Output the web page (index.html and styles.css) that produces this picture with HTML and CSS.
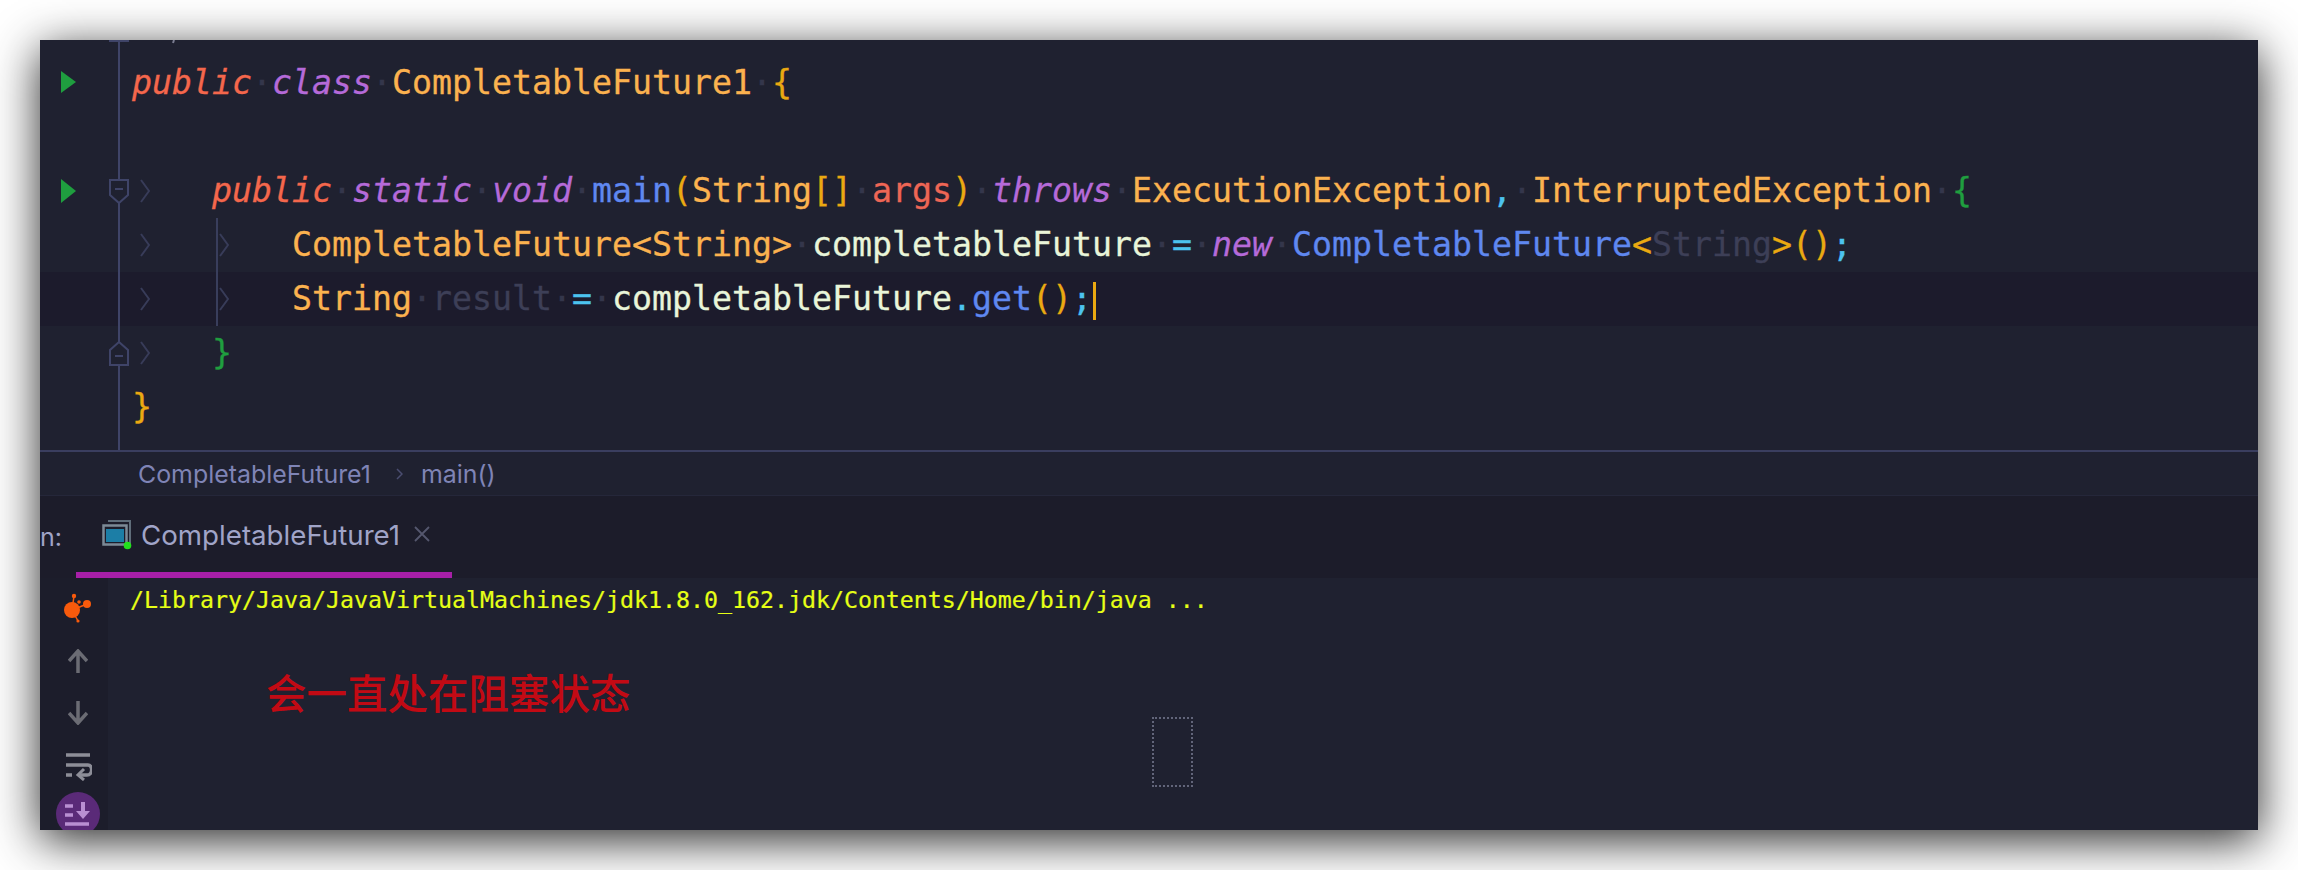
FILE: index.html
```html
<!DOCTYPE html>
<html lang="en">
<head>
<meta charset="utf-8">
<title>CompletableFuture1</title>
<link rel="stylesheet" href="styles.css">
</head>
<body>
<main class="window">
  <section class="editor">
    <div class="fold-line"></div>
    <div class="indent-guide"></div>
    <div class="clip-row"><svg class="clip-mark" width="150" height="4" viewBox="0 0 150 4"><path d="M69 1h20" stroke="#3f4468" stroke-width="2"/><path d="M134 0l-1 3" stroke="#7a7c90" stroke-width="2"/></svg></div>

    <div class="line">
      <div class="gutter"><svg class="run" width="15" height="22" viewBox="0 0 15 22"><path d="M0 0L15 11L0 22Z"/></svg></div>
      <code class="code"><span class="kw-a">public</span><span class="ws">·</span><span class="kw-b">class</span><span class="ws">·</span><span class="type">CompletableFuture1</span><span class="ws">·</span><span class="gold">{</span></code>
    </div>

    <div class="line">
      <div class="gutter"></div>
      <code class="code"></code>
    </div>

    <div class="line">
      <div class="gutter">
        <svg class="run" width="15" height="24" viewBox="0 0 15 24"><path d="M0 0L15 12L0 24Z"/></svg>
        <svg class="fold" width="20" height="25" viewBox="0 0 20 25"><path d="M1 1H19V16L10 24L1 16Z" fill="#1f2130" stroke="#3f4468" stroke-width="2"/><path d="M6 10H14" stroke="#3f4468" stroke-width="2"/></svg>
        <svg class="chev" width="10" height="24" viewBox="0 0 10 24"><path d="M1 1L9 12L1 23" fill="none" stroke="#383c59" stroke-width="2"/></svg>
      </div>
      <code class="code">    <span class="kw-a">public</span><span class="ws">·</span><span class="kw-b">static</span><span class="ws">·</span><span class="kw-b">void</span><span class="ws">·</span><span class="fn">main</span><span class="gold">(</span><span class="type">String</span><span class="gold">[]</span><span class="ws">·</span><span class="arg">args</span><span class="gold">)</span><span class="ws">·</span><span class="kw-b">throws</span><span class="ws">·</span><span class="type">ExecutionException</span><span class="op">,</span><span class="ws">·</span><span class="type">InterruptedException</span><span class="ws">·</span><span class="green">{</span></code>
    </div>

    <div class="line">
      <div class="gutter">
        <svg class="chev" width="10" height="24" viewBox="0 0 10 24"><path d="M1 1L9 12L1 23" fill="none" stroke="#383c59" stroke-width="2"/></svg>
        <svg class="chev-two" width="10" height="24" viewBox="0 0 10 24"><path d="M1 1L9 12L1 23" fill="none" stroke="#383c59" stroke-width="2"/></svg>
      </div>
      <code class="code">        <span class="type">CompletableFuture&lt;String&gt;</span><span class="ws">·</span><span class="var">completableFuture</span><span class="ws">·</span><span class="op">=</span><span class="ws">·</span><span class="kw-b">new</span><span class="ws">·</span><span class="fn">CompletableFuture</span><span class="gold">&lt;</span><span class="dim">String</span><span class="gold">&gt;()</span><span class="op">;</span></code>
    </div>

    <div class="line current">
      <div class="gutter">
        <svg class="chev" width="10" height="24" viewBox="0 0 10 24"><path d="M1 1L9 12L1 23" fill="none" stroke="#383c59" stroke-width="2"/></svg>
        <svg class="chev-two" width="10" height="24" viewBox="0 0 10 24"><path d="M1 1L9 12L1 23" fill="none" stroke="#383c59" stroke-width="2"/></svg>
      </div>
      <code class="code">        <span class="type">String</span><span class="ws">·</span><span class="dim">result</span><span class="ws">·</span><span class="op">=</span><span class="ws">·</span><span class="var">completableFuture</span><span class="op">.</span><span class="fn">get</span><span class="gold">()</span><span class="op">;</span><span class="caret"></span></code>
    </div>

    <div class="line">
      <div class="gutter">
        <svg class="fold" width="20" height="25" viewBox="0 0 20 25"><path d="M1 24H19V9L10 1L1 9Z" fill="#1f2130" stroke="#3f4468" stroke-width="2"/><path d="M6 15H14" stroke="#3f4468" stroke-width="2"/></svg>
        <svg class="chev" width="10" height="24" viewBox="0 0 10 24"><path d="M1 1L9 12L1 23" fill="none" stroke="#383c59" stroke-width="2"/></svg>
      </div>
      <code class="code">    <span class="green">}</span></code>
    </div>

    <div class="line">
      <div class="gutter"></div>
      <code class="code"><span class="gold">}</span></code>
    </div>
  </section>

  <nav class="crumbs"><span>CompletableFuture1</span><svg class="crumb-sep" width="7" height="12" viewBox="0 0 7 12"><path d="M1 1L6 6L1 11" fill="none" stroke="#4a4d70" stroke-width="1.5"/></svg><span>main()</span></nav>

  <div class="tabbar">
    <span class="tab-label">n:</span>
    <div class="tab">
      <svg class="tab-icon" width="30" height="30" viewBox="0 0 30 30"><path d="M6 1H28V24" fill="none" stroke="#5f6d7a" stroke-width="2"/><rect x="1.5" y="5.500" width="23" height="19" fill="#1c1d2b" stroke="#7c8a97" stroke-width="2.500"/><rect x="4" y="9" width="18" height="13" fill="#1c7ea6"/><circle cx="25.500" cy="25.500" r="3.800" fill="#22e01c"/></svg>
      <span class="tab-title">CompletableFuture1</span>
      <svg class="tab-close" width="16" height="16" viewBox="0 0 16 16"><path d="M1 1L15 15M15 1L1 15" stroke="#55576e" stroke-width="1.800"/></svg>
    </div>
  </div>

  <section class="console">
    <aside class="tools">
      <svg width="28" height="32" viewBox="0 0 28 32" class="tool-first"><g fill="#f85a0c"><circle cx="8" cy="18" r="8"/><circle cx="23" cy="12" r="4"/><circle cx="10" cy="4" r="2.200"/><circle cx="15" cy="10" r="1.800"/><circle cx="14" cy="29" r="1.600"/></g><path d="M8 18L10 4M8 18L23 12M8 18L14 29" stroke="#f85a0c" stroke-width="1.500"/></svg>
      <svg width="20" height="24" viewBox="0 0 20 24" class="tool-up"><path d="M10 24V3M1 12L10 2L19 12" fill="none" stroke="#6b6c74" stroke-width="3.500"/></svg>
      <svg width="20" height="24" viewBox="0 0 20 24" class="tool-down"><path d="M10 0V21M1 12L10 22L19 12" fill="none" stroke="#6b6c74" stroke-width="3.500"/></svg>
      <svg width="26" height="28" viewBox="0 0 26 28" class="tool-wrap"><path d="M0 2H24M0 12H22C27 12 27 22 21 22H13M0 22H6" fill="none" stroke="#8d8e98" stroke-width="3.500"/><path d="M18 16L12 22L18 27" fill="none" stroke="#8d8e98" stroke-width="3"/></svg>
      <div class="tool-active"><svg width="26" height="24" viewBox="0 0 26 24"><path d="M0 4H8M0 13H8M0 22H24" stroke="#b98fd2" stroke-width="3.500"/><path d="M18 0V10" stroke="#b98fd2" stroke-width="4"/><path d="M11 9H25L18 17Z" fill="#b98fd2"/></svg></div>
    </aside>
    <div class="output">
      <pre class="path">/Library/Java/JavaVirtualMachines/jdk1.8.0_162.jdk/Contents/Home/bin/java ...</pre>
      <p class="note">会一直处在阻塞状态</p>
      <div class="selection"></div>
    </div>
  </section>
</main>
</body>
</html>
```
FILE: styles.css
```css
html, body { margin: 0; padding: 0; background: #fff; }
body { padding: 40px; width: 2218px; height: 790px; overflow: hidden; }

.window {
  width: 2218px;
  height: 790px;
  background: #1f2130;
  overflow: hidden;
  display: flex;
  flex-direction: column;
  box-shadow: 0 10px 44px rgba(0, 0, 0, .85);
  position: relative;
}

.editor {
  position: relative;
  height: 410px;
  flex: none;
  border-bottom: 2px solid #3a3e5f;
}
.fold-line { position: absolute; left: 78px; top: 0; bottom: 0; width: 2px; background: #3f4468; }
.indent-guide { position: absolute; left: 176px; top: 178px; height: 108px; width: 2px; background: #393e5c; }
.clip-row { height: 16px; position: relative; }
.clip-mark { display: block; }

.line { height: 54px; display: flex; align-items: center; }
.line.current { background: #1c1b2c; }
.gutter { width: 92px; height: 54px; flex: none; position: relative; }
.gutter svg { position: absolute; }
.run { left: 21px; top: 15px; fill: #1f9e3f; }
.fold { left: 69px; top: 15px; }
.chev { left: 100px; top: 15px; }
.chev-two { left: 179px; top: 15px; }

.code {
  font-family: "DejaVu Sans Mono", monospace;
  font-size: 33.22px;
  line-height: 54px;
  white-space: pre;
  color: #fbb24f;
  -webkit-text-stroke: .3px currentColor;
}
.kw-a { color: #f4674c; font-style: italic; }
.kw-b { color: #b56ad9; font-style: italic; }
.type { color: #fbb24f; }
.fn { color: #5f88f0; }
.gold { color: #eaa911; }
.green { color: #1f9e3f; }
.arg { color: #ee6655; }
.op { color: #4cc3ef; }
.var { color: #e9f5d9; }
.dim { color: #3d3f57; }
.ws { color: #34364b; }
.caret {
  display: inline-block;
  width: 3px;
  height: 38px;
  background: #eaa911;
  vertical-align: middle;
  margin-left: 1px;
}

.crumbs {
  height: 43px;
  flex: none;
  display: flex;
  align-items: center;
  padding-left: 98px;
  font-family: Inter, sans-serif;
  font-size: 24.9px;
  color: #7f84b6;
  border-bottom: 1px solid #25273a;
}
.crumb-sep { margin: 0 18px 0 25px; }

.tabbar {
  height: 82px;
  flex: none;
  background: #1c1c2a;
  display: flex;
  align-items: flex-start;
  font-family: Inter, sans-serif;
  font-size: 27.7px;
  color: #a0a4c8;
}
.tab-label { width: 36px; flex: none; font-size: 25px; line-height: 82px; height: 76px; }
.tab {
  width: 376px;
  height: 82px;
  border-bottom: 6px solid #a71fa8;
  display: flex;
  align-items: center;
  padding-left: 26px;
  box-sizing: border-box;
  flex: none;
}
.tab-icon { margin-right: 9px; position: relative; top: 1px; }
.tab-title { padding-top: 2px; }
.tab-close { margin-left: 14px; }

.console { flex: 1; display: flex; min-height: 0; position: relative; }
.tools {
  width: 68px;
  flex: none;
  background: #1c1d2b;
  display: flex;
  flex-direction: column;
  align-items: center;
  overflow: hidden;
  padding-left: 8px;
  box-sizing: border-box;
}
.tool-first { margin-top: 14px; flex: none; }
.tool-up { margin-top: 25px; flex: none; }
.tool-down { margin-top: 28px; flex: none; }
.tool-wrap { margin-top: 28px; flex: none; margin-left: 2px; }
.tool-active {
  width: 44px;
  height: 44px;
  border-radius: 50%;
  background: #5a2a78;
  flex: none;
  margin-top: 11px;
  display: flex;
  align-items: center;
  justify-content: center;
}

.output { flex: 1; padding-left: 22px; position: relative; }
.path {
  margin: 8px 0 0;
  font-family: "DejaVu Sans Mono", monospace;
  font-size: 23.25px;
  line-height: 28px;
  color: #e6ff16;
  -webkit-text-stroke: .2px currentColor;
}
.note {
  margin: 56px 0 0 136px;
  font-family: "Noto Sans CJK SC", sans-serif;
  font-size: 40.5px;
  font-weight: 500;
  line-height: 44px;
  color: #c20a14;
}
.selection {
  position: absolute;
  left: 1044px;
  top: 139px;
  width: 41px;
  height: 70px;
  border: 2px dotted #62657a;
  box-sizing: border-box;
}
```
